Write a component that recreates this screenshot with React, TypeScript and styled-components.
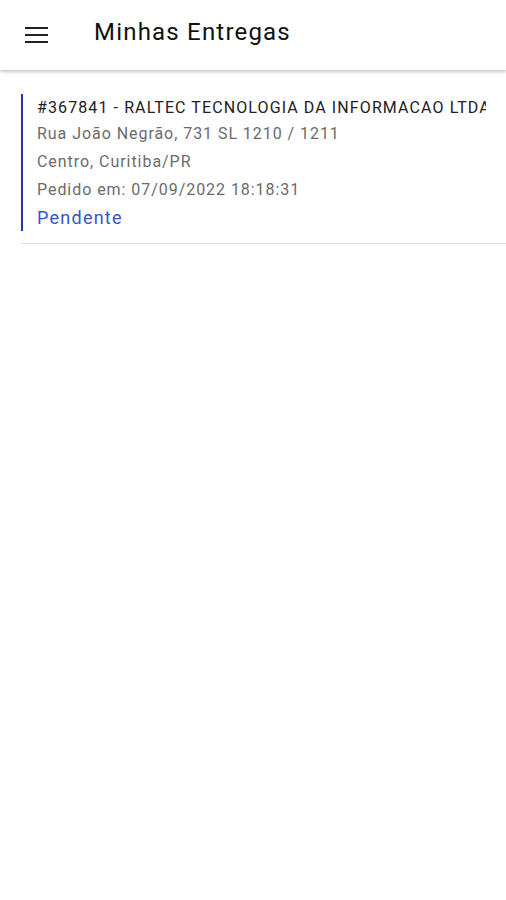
import React from 'react';
import styled, {createGlobalStyle} from 'styled-components';

const GlobalStyle = createGlobalStyle`
    html, body {
        margin: 0;
        padding: 0;
        background: #ffffff;
        font-family: Roboto, "Noto Sans", sans-serif;
    }
`;

const Page = styled.div`
    width: 506px;
    min-height: 900px;
    background: #ffffff;
`;

const Header = styled.header`
    height: 70px;
    display: flex;
    align-items: center;
    background: #ffffff;
    box-shadow: 0 2px 3px rgba(0, 0, 0, 0.22);
    position: relative;
`;

const MenuButton = styled.button`
    width: 24px;
    height: 24px;
    margin-left: 25px;
    padding: 0;
    border: none;
    background: transparent;
    display: flex;
    flex-direction: column;
    justify-content: center;
    gap: 5px;
`;

const MenuBar = styled.span`
    display: block;
    width: 23px;
    height: 2px;
    background: #212121;
`;

const Title = styled.h1`
    margin: 0 0 6px 45px;
    font-size: 24px;
    font-weight: 400;
    color: #111111;
    letter-spacing: 1.2px;
`;

const List = styled.div`
    padding: 24px 0 0 21px;
`;

const Card = styled.div`
    border-bottom: 1px solid #dcdcdc;
    padding-bottom: 12px;
`;

const CardBody = styled.div`
    border-left: 2px solid #2233b8;
    padding: 2px 0 0 14px;
    margin-right: 20px;
    overflow: hidden;
    white-space: nowrap;
`;

const Heading = styled.div`
    font-size: 16px;
    line-height: 24px;
    letter-spacing: 1.1px;
    color: #212121;
`;

const Line = styled.div`
    font-size: 16px;
    line-height: 28px;
    letter-spacing: 0.95px;
    color: #6b6b6b;
`;

const Status = styled.div`
    font-size: 18px;
    line-height: 27px;
    letter-spacing: 1.25px;
    color: #3357c9;
`;

export default function App() {
    return (
        <Page>
            <GlobalStyle/>
            <Header>
                <MenuButton aria-label="menu">
                    <MenuBar/>
                    <MenuBar/>
                    <MenuBar/>
                </MenuButton>
                <Title>Minhas Entregas</Title>
            </Header>
            <List>
                <Card>
                    <CardBody>
                        <Heading>#367841 - RALTEC TECNOLOGIA DA INFORMACAO LTDA</Heading>
                        <Line>Rua João Negrão, 731 SL 1210 / 1211</Line>
                        <Line>Centro, Curitiba/PR</Line>
                        <Line>Pedido em: 07/09/2022 18:18:31</Line>
                        <Status>Pendente</Status>
                    </CardBody>
                </Card>
            </List>
        </Page>
    );
}
